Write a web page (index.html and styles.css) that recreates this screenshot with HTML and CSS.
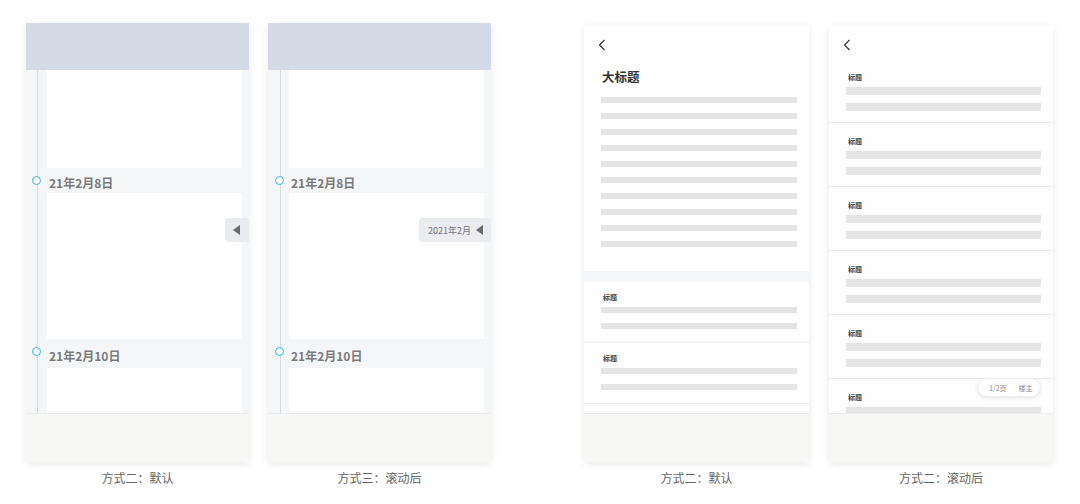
FILE: index.html
```html
<!DOCTYPE html>
<html>
<head>
    <meta charset="UTF-8">
    <link rel="stylesheet" href="styles.css">
</head>
<body>
<div class="stage">

    <!-- timeline, default -->
    <div class="figure fig-a">
        <div class="phone tall">
            <div class="phone-head"></div>
            <div class="tl-body">
                <div class="card c1"></div>
                <div class="date d1"><span class="dot"></span>21年2月8日</div>
                <div class="card c2"></div>
                <div class="date d2"><span class="dot"></span>21年2月10日</div>
                <div class="card c3"></div>
            </div>
            <div class="phone-foot"></div>
            <div class="side-tab">
                <svg width="7" height="10" viewBox="0 0 7 10"><polygon points="7,0 7,10 0,5" fill="#6b6b6b"/></svg>
            </div>
        </div>
        <div class="caption">方式二：默认</div>
    </div>

    <!-- timeline, scrolled -->
    <div class="figure fig-b">
        <div class="phone tall">
            <div class="phone-head"></div>
            <div class="tl-body">
                <div class="card c1"></div>
                <div class="date d1"><span class="dot"></span>21年2月8日</div>
                <div class="card c2"></div>
                <div class="date d2"><span class="dot"></span>21年2月10日</div>
                <div class="card c3"></div>
            </div>
            <div class="phone-foot"></div>
            <div class="side-tab wide">
                <span>2021年2月</span>
                <svg width="7" height="10" viewBox="0 0 7 10"><polygon points="7,0 7,10 0,5" fill="#6b6b6b"/></svg>
            </div>
        </div>
        <div class="caption">方式三：滚动后</div>
    </div>

    <!-- article, default -->
    <div class="figure fig-c">
        <div class="phone short">
            <div class="list-body">
                <div class="article">
                    <div class="nav"><svg width="8" height="12" viewBox="0 0 8 12"><polyline points="6.5,1 1.5,6 6.5,11" fill="none" stroke="#333" stroke-width="1.2"/></svg></div>
                    <div class="big-title">大标题</div>
                    <div class="lines">
                        <div class="bar"></div><div class="bar"></div><div class="bar"></div><div class="bar"></div><div class="bar"></div>
                        <div class="bar"></div><div class="bar"></div><div class="bar"></div><div class="bar"></div><div class="bar"></div>
                    </div>
                </div>
                <div class="strip"></div>
                <div class="item">
                    <div class="item-title">标题</div>
                    <div class="bar"></div><div class="bar"></div>
                </div>
                <div class="item">
                    <div class="item-title">标题</div>
                    <div class="bar"></div><div class="bar"></div>
                </div>
                <div class="item"></div>
            </div>
            <div class="phone-foot"></div>
        </div>
        <div class="caption">方式二：默认</div>
    </div>

    <!-- article, scrolled -->
    <div class="figure fig-d">
        <div class="phone short">
            <div class="list-body">
                <div class="nav"><svg width="8" height="12" viewBox="0 0 8 12"><polyline points="6.5,1 1.5,6 6.5,11" fill="none" stroke="#333" stroke-width="1.2"/></svg></div>
                <div class="item big first">
                    <div class="item-title">标题</div>
                    <div class="bar"></div><div class="bar"></div>
                </div>
                <div class="item big">
                    <div class="item-title">标题</div>
                    <div class="bar"></div><div class="bar"></div>
                </div>
                <div class="item big">
                    <div class="item-title">标题</div>
                    <div class="bar"></div><div class="bar"></div>
                </div>
                <div class="item big">
                    <div class="item-title">标题</div>
                    <div class="bar"></div><div class="bar"></div>
                </div>
                <div class="item big">
                    <div class="item-title">标题</div>
                    <div class="bar"></div><div class="bar"></div>
                </div>
                <div class="item big">
                    <div class="item-title">标题</div>
                    <div class="bar"></div><div class="bar"></div>
                </div>
            </div>
            <div class="phone-foot"></div>
            <div class="pager"><span><b>1</b>/2页</span><span>楼主</span></div>
        </div>
        <div class="caption">方式二：滚动后</div>
    </div>

</div>
</body>
</html>
```

FILE: styles.css
```css
body {
    margin: 0;
    background: #fff;
    font-family: "Noto Sans CJK SC", "Noto Sans", sans-serif;
    color: #333;
}

.stage {
    display: flex;
    align-items: flex-start;
    padding-left: 26px;
}

.figure {
    display: flex;
    flex-direction: column;
}
.fig-a { width: 223px; margin-top: 23px; }
.fig-b { width: 223px; margin-top: 23px; margin-left: 19px; }
.fig-c { width: 225px; margin-top: 26px; margin-left: 93px; }
.fig-d { width: 224px; margin-top: 26px; margin-left: 20px; }

.phone {
    position: relative;
    display: flex;
    flex-direction: column;
    background: #fff;
    box-shadow: 0 2px 8px rgba(0, 0, 0, 0.09);
    overflow: hidden;
}
.phone.tall { height: 439px; }
.phone.short { height: 436px; }

.phone-head {
    height: 47px;
    flex: none;
    background: #d4dbe4;
}

.phone-foot {
    height: 48px;
    flex: none;
    background: #f7f7f5;
    border-top: 1px solid #ebebeb;
}

.caption {
    margin-top: 6px;
    line-height: 20px;
    text-align: center;
    font-size: 12px;
    color: #666;
}

/* timeline */
.tl-body {
    position: relative;
    flex: 1;
    overflow: hidden;
    background: #f5f6f8;
    padding: 0 7px 0 21px;
}
.tl-body::before {
    content: "";
    position: absolute;
    left: 11px;
    top: 0;
    bottom: 0;
    width: 1px;
    background: #d6dae0;
}
.fig-b .tl-body::before { left: 12px; }

.card { background: #fff; }
.c1 { height: 98px; }
.c2 { height: 146px; }
.c3 { height: 60px; }

.date {
    position: relative;
    padding-left: 2px;
    line-height: 25px;
    font-size: 12px;
    font-weight: bold;
    color: #7a7a7a;
}
.d1 { height: 25px; padding-top: 2px; box-sizing: border-box; }
.d2 { height: 29px; padding-top: 4px; box-sizing: border-box; }

.dot {
    position: absolute;
    left: -15px;
    top: 8px;
    width: 7px;
    height: 7px;
    border: 1.6px solid #2db4f0;
    border-radius: 50%;
    background: #fff;
}
.fig-b .dot { left: -14px; }

.side-tab {
    position: absolute;
    right: 0;
    top: 195px;
    height: 24px;
    display: flex;
    align-items: center;
    gap: 5px;
    padding: 0 9px 0 8px;
    background: #ebecf0;
    border-radius: 4px 0 0 4px;
    font-size: 9px;
    color: #777;
}
.side-tab.wide { padding-left: 9px; padding-right: 8px; }

/* article list */
.list-body {
    flex: 1;
    overflow: hidden;
    display: flex;
    flex-direction: column;
}

.nav {
    height: 38px;
    flex: none;
    display: flex;
    align-items: center;
    padding-left: 14px;
}

.article {
    padding: 0 12px 24px 17px;
}
.big-title {
    margin-top: 6px;
    padding-left: 1px;
    line-height: 14px;
    font-size: 12.5px;
    font-weight: bold;
    color: #333;
}
.lines {
    margin-top: 13px;
    display: flex;
    flex-direction: column;
    gap: 10px;
}
.article .nav { margin-left: -17px; }

.bar {
    height: 6px;
    background: #e5e5e5;
}

.strip {
    height: 11px;
    flex: none;
    background: #f5f6f8;
}

.item {
    flex: none;
    padding: 11px 12px 13px 17px;
    border-bottom: 1px solid #ececf0;
    display: flex;
    flex-direction: column;
}
.item .bar + .bar { margin-top: 10px; }
.item-title {
    padding-left: 2px;
    line-height: 8px;
    height: 8px;
    margin-bottom: 6px;
    font-size: 7px;
    font-weight: bold;
    color: #444;
}

.item.big {
    height: 64px;
    box-sizing: border-box;
    padding: 14px 12px 0 17px;
}
.item.big.first {
    height: 59px;
    padding-top: 9px;
}
.item.big .bar { height: 8px; }
.item.big .bar + .bar { margin-top: 8px; }

.pager {
    position: absolute;
    left: 148px;
    top: 352px;
    width: 64px;
    height: 19px;
    box-sizing: border-box;
    display: flex;
    align-items: center;
    gap: 12px;
    padding-left: 11px;
    background: #fff;
    border: 1px solid #eee;
    border-radius: 10px;
    box-shadow: 0 1px 4px rgba(0, 0, 0, 0.12);
    font-size: 7px;
    color: #888;
}
.pager b {
    font-weight: normal;
    color: #2db4f0;
}
```
